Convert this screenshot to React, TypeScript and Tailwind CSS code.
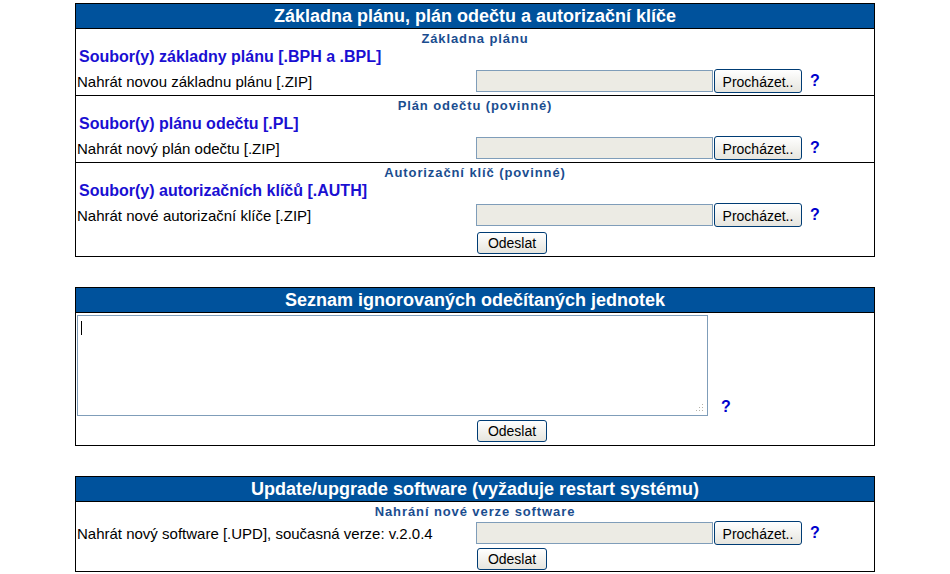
import type { ReactNode } from "react";

const font = { fontFamily: '"Liberation Sans", Arial, sans-serif' };

function PanelHeader({ children }: { children: ReactNode }) {
  return (
    <div className="flex h-[25px] items-center justify-center border-b border-black bg-[#00529c] text-[18px] leading-none font-bold text-white">
      {children}
    </div>
  );
}

function SubHeader({ children }: { children: ReactNode }) {
  return (
    <div className="flex h-[18px] items-center justify-center text-[13px] leading-none font-bold tracking-[0.9px] text-[#1a4d8f]">
      {children}
    </div>
  );
}

function BrowseButton() {
  return (
    <button className="ml-px h-[24px] w-[88px] rounded-[3px] border border-[#003c74] bg-gradient-to-b from-[#ffffff] to-[#e6e5de] pt-px text-[14px] leading-none text-black">
      Procházet..
    </button>
  );
}

function SendButton() {
  return (
    <button className="h-[22px] w-[70px] rounded-[3px] border border-[#003c74] bg-gradient-to-b from-[#ffffff] to-[#e6e5de] text-[14px] leading-none text-black">
      Odeslat
    </button>
  );
}

function Help() {
  return <span className="ml-[8px] text-[16px] leading-none font-bold text-[#0000cc]">?</span>;
}

function FileRow({ label, h = "h-[28px]" }: { label: string; h?: string }) {
  return (
    <div className={`grid grid-cols-[400px_1fr] items-center ${h}`}>
      <div className="pl-px text-[15px] leading-none text-black">{label}</div>
      <div className="flex items-center">
        <div className="h-[22px] w-[237px] border border-[#7f9db9] bg-[#ecebe4]" />
        <BrowseButton />
        <Help />
      </div>
    </div>
  );
}

function Section({ title, files, label, last }: { title: string; files: string; label: string; last?: boolean }) {
  return (
    <div className={last ? "" : "border-b border-black"}>
      <SubHeader>{title}</SubHeader>
      <div className="flex h-[20px] items-center pl-[3px] text-[16px] leading-none font-bold text-[#1a0fd2]">{files}</div>
      <FileRow label={label} />
    </div>
  );
}

function SendRow({ h }: { h: string }) {
  return (
    <div className={`grid grid-cols-[400px_1fr] items-center ${h}`}>
      <div />
      <div className="pl-px">
        <SendButton />
      </div>
    </div>
  );
}

export default function App() {
  return (
    <div className="min-h-screen bg-white pt-[3px]" style={font}>
      <div className="mx-auto w-[800px] border border-black">
        <PanelHeader>Základna plánu, plán odečtu a autorizační klíče</PanelHeader>
        <Section title="Základna plánu" files="Soubor(y) základny plánu [.BPH a .BPL]" label="Nahrát novou základnu plánu [.ZIP]" />
        <Section title="Plán odečtu (povinné)" files="Soubor(y) plánu odečtu [.PL]" label="Nahrát nový plán odečtu [.ZIP]" />
        <Section title="Autorizační klíč (povinné)" files="Soubor(y) autorizačních klíčů [.AUTH]" label="Nahrát nové autorizační klíče [.ZIP]" last />
        <SendRow h="h-[27px]" />
      </div>

      <div className="mx-auto mt-[30px] w-[800px] border border-black">
        <PanelHeader>Seznam ignorovaných odečítaných jednotek</PanelHeader>
        <div className="flex items-end pt-[2px] pl-px">
          <div className="relative h-[101px] w-[631px] border border-[#7f9db9] bg-white">
            <span className="absolute top-[5px] left-[3px] h-[14px] w-px bg-black" />
            <svg className="absolute right-[3px] bottom-[3px]" width="9" height="9" viewBox="0 0 9 9">
              <rect x="7" y="1" width="1" height="1" fill="#b5b3aa" />
              <rect x="4" y="4" width="1" height="1" fill="#b5b3aa" />
              <rect x="7" y="4" width="1" height="1" fill="#b5b3aa" />
              <rect x="1" y="7" width="1" height="1" fill="#b5b3aa" />
              <rect x="4" y="7" width="1" height="1" fill="#b5b3aa" />
              <rect x="7" y="7" width="1" height="1" fill="#b5b3aa" />
            </svg>
          </div>
          <span className="mb-px ml-[13px] text-[16px] leading-none font-bold text-[#0000cc]">?</span>
        </div>
        <SendRow h="h-[29px]" />
      </div>

      <div className="mx-auto mt-[30px] w-[800px] border border-black">
        <PanelHeader>Update/upgrade software (vyžaduje restart systému)</PanelHeader>
        <SubHeader>Nahrání nové verze software</SubHeader>
        <FileRow label="Nahrát nový software [.UPD], současná verze: v.2.0.4" h="h-[26px]" />
        <SendRow h="h-[25px]" />
      </div>
    </div>
  );
}
